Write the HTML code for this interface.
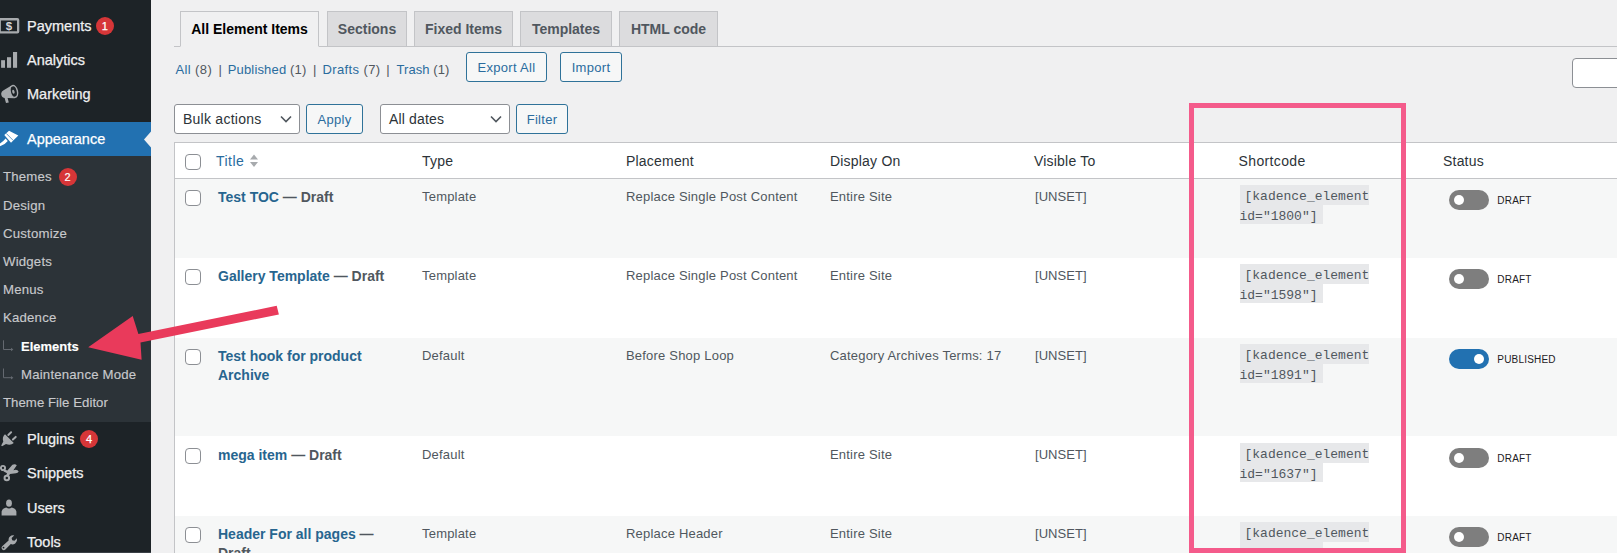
<!DOCTYPE html>
<html><head><meta charset="utf-8">
<style>
*{box-sizing:border-box;margin:0;padding:0}
html,body{width:1617px;height:553px;overflow:hidden;background:#f0f0f1;font-family:"Liberation Sans",sans-serif;color:#3c434a}
#page{position:relative;width:1617px;height:553px;overflow:hidden}
a{text-decoration:none;color:#2a6c9e}
/* sidebar */
#side{position:absolute;left:0;top:0;width:151px;height:553px;background:#1d2327}
.mi{position:absolute;left:0;width:151px;height:34px;color:#f0f0f1;font-size:14.5px;line-height:34px;white-space:nowrap}
.mi .t{position:absolute;left:27px;top:0;-webkit-text-stroke:.25px currentColor}
.mi svg{position:absolute;left:-2px;top:7px}
.bdg{display:inline-block;background:#d63638;color:#fff;border-radius:9px;width:18px;height:18px;line-height:18px;font-size:11px;text-align:center;vertical-align:middle;margin-left:4px;position:relative;top:-1px}
#sub{position:absolute;left:0;top:156px;width:151px;height:266px;background:#2c3338}
.si{position:absolute;left:3px;-webkit-text-stroke:.15px currentColor;color:#c8c9cc;font-size:13.2px;line-height:18px;white-space:nowrap;letter-spacing:.2px}
/* tabs */
.tab{position:absolute;top:11px;height:36px;border:1px solid #c3c4c7;background:#dcdcde;color:#50575e;font-weight:bold;font-size:14px;line-height:34px;text-align:center;white-space:nowrap}
.tab.on{background:#f0f0f1;color:#000;border-bottom-color:#f0f0f1}
#tabline{position:absolute;left:174px;right:0;top:46px;height:1px;background:#c3c4c7}
.btn{position:absolute;border:1px solid #2f7299;border-radius:3px;background:#f6f7f7;color:#2a6c9e;font-size:13px;text-align:center;white-space:nowrap;height:30px;line-height:30px;letter-spacing:.3px}
.sel{position:absolute;border:1px solid #8c8f94;border-radius:3px;background:#fff;color:#2c3338;font-size:14px;height:30px;line-height:28px;padding-left:8px;white-space:nowrap}
.sel svg{position:absolute;right:7px;top:10px}
.txt{position:absolute;white-space:nowrap;font-size:13px;line-height:18px;color:#50575e;letter-spacing:.28px;word-spacing:-.6px}
/* table */
#tbl{position:absolute;left:173.5px;top:142px;width:1460px;height:420px;background:#fff;border:1px solid #c3c4c7}
.row{position:absolute;left:174.5px;width:1450px}
.alt{background:#f6f7f7}
.cb{position:absolute;left:185px;width:16px;height:16px;border:1px solid #8c8f94;border-radius:4px;background:#fff}
.th{position:absolute;top:152px;font-size:14px;line-height:18px;color:#2c3338;white-space:nowrap;letter-spacing:.2px}
.ti{position:absolute;left:218px;font-size:14px;line-height:19px;font-weight:bold;color:#50575e;white-space:nowrap}
.ti a{color:#27658f}
.c{position:absolute;font-size:13px;line-height:18px;color:#50575e;white-space:nowrap;letter-spacing:.2px;margin-top:1px}
.code{position:absolute;left:1239.5px;width:140px;font-family:"Liberation Mono",monospace;font-size:13px;line-height:19.5px;color:#50575e}
.code code{font-family:inherit;background:#e7e8ea;padding:4px 5px 0.5px 5px;}
.tg{position:absolute;left:1449px;width:40px;height:20px;border-radius:10px;background:#7e7e7e}
.tg i{position:absolute;left:5px;top:5px;width:10px;height:10px;border-radius:5px;background:#fff}
.tg.on{background:#2271b1}
.tg.on i{left:25px}
.st{position:absolute;margin-top:1px;left:1497.3px;font-size:10px;line-height:12px;color:#1d2024;white-space:nowrap;letter-spacing:.2px}
#pink{position:absolute;left:1189.3px;top:102.7px;width:217.2px;height:450px;border:5.3px solid #f45b8b}
</style></head><body><div id="page">

<div id="side">
 <div class="mi" style="top:9px"><span class="t">Payments <span class="bdg" style="margin-left:0.4px">1</span></span></div>
 <div class="mi" style="top:43px"><span class="t">Analytics</span></div>
 <div class="mi" style="top:77px"><span class="t">Marketing</span></div>
 <div class="mi" style="top:122px;background:#2271b1;color:#fff"><span class="t">Appearance</span></div>
 <div id="sub"></div><div style="position:absolute;left:0;top:552px;width:151px;height:1px;background:#3a4046"></div>
 <div class="si" style="top:168px">Themes <span class="bdg" style="margin-left:3px">2</span></div>
 <div class="si" style="top:197px">Design</div>
 <div class="si" style="top:225px">Customize</div>
 <div class="si" style="top:253px">Widgets</div>
 <div class="si" style="top:281px">Menus</div>
 <div class="si" style="top:309px">Kadence</div>
 <div class="si" style="top:338px;left:21px;color:#fff;font-weight:bold;font-size:13px;letter-spacing:0">Elements</div>
 <div class="si" style="top:366px;left:21px">Maintenance Mode</div>
 <div class="si" style="top:394px;letter-spacing:.05px">Theme File Editor</div>
 <div class="mi" style="top:422px"><span class="t">Plugins <span class="bdg" style="margin-left:1.4px">4</span></span></div>
 <div class="mi" style="top:456px"><span class="t">Snippets</span></div>
 <div class="mi" style="top:491px"><span class="t">Users</span></div>
 <div class="mi" style="top:525px"><span class="t">Tools</span></div>

<svg style="position:absolute;left:0;top:0" width="151" height="553" viewBox="0 0 151 553">
 <g fill="#a7aaad" stroke="none">
  <!-- payments -->
  <path fill-rule="evenodd" d="M-1.3 18.1 H17.3 Q19.3 18.1 19.3 20.1 V31.6 Q19.3 33.6 17.3 33.6 H-1.3z M0.9 20.4 V31.3 H17 V20.4z"/>
  <!-- analytics -->
  <rect x="1.1" y="60.2" width="3.9" height="7.6"/>
  <rect x="7" y="57.2" width="4.1" height="10.6"/>
  <rect x="13" y="52" width="4.1" height="15.8"/>
  <!-- marketing -->
  <path d="M1.2 93.3 Q1.6 91.2 3.6 90.2 L11.5 85.6 Q9.6 88.5 10.4 92.5 Q11.3 96.6 14.4 98.3 L7.6 98 L8.8 102.6 L6 102.9 L4.6 98 Q1 97.3 1.2 93.3z"/>
  <ellipse cx="13.8" cy="91.5" rx="3.6" ry="6" transform="rotate(-14 13.8 91.5)" fill="none" stroke="#a7aaad" stroke-width="1.5"/>
  <ellipse cx="13.4" cy="91.7" rx="1.2" ry="2" transform="rotate(-14 13.4 91.7)"/>
  <!-- plugins -->
  <path d="M5 434.3 L13.8 443 Q10.5 446 6 444 L2 446.2 L1.2 445.4 L3.3 441.5 Q1.8 437.3 5 434.3z"/>
  <path d="M8.3 434.9 L11.1 432.3 M12.9 439.5 L15.7 436.9" stroke="#a7aaad" stroke-width="2" stroke-linecap="round" fill="none"/>
  <!-- snippets -->
  <circle cx="3" cy="468" r="2.1" fill="none" stroke="#a7aaad" stroke-width="1.9"/>
  <circle cx="6.8" cy="478.1" r="2.25" fill="none" stroke="#a7aaad" stroke-width="2"/>
  <path d="M4.4 469.4 L7.4 470.6 L12.4 464.7 Q15.2 463.8 16.8 465.2 L13.4 470.2 L15.8 469.7 Q17.8 470 18.7 471.4 Q17.8 472.8 16 473.3 L10 473.9 L8.4 476.4 L6.2 475.4 L7 473.2 L3.4 471.2z"/>
  <!-- users -->
  <ellipse cx="9" cy="503.2" rx="2.9" ry="3.6"/>
  <path d="M1.6 515.6 V511.6 Q1.8 508.8 6.2 507.5 Q9 509.4 11.8 507.5 Q16.2 508.8 16.4 511.6 V515.6z"/>
  <!-- tools -->
  <path d="M2.2 549.5 Q0.6 547.8 2.2 546.2 L8.6 540.6 Q8.2 537.2 11.4 535.6 Q13 535 14.2 535.4 L11.6 538 L12.2 540.2 L14.4 540.8 L17 538.2 Q17.6 541.4 15.2 543.4 Q13 545 10.8 544 L5.4 549.6 Q3.8 551 2.2 549.5z"/>
 </g>
 <circle cx="3.5" cy="547.6" r="0.9" fill="#1d2327"/>
 <text x="8.9" y="30.1" text-anchor="middle" font-family="Liberation Sans, sans-serif" font-weight="bold" font-size="11.5" fill="#d5d7da">$</text>
 <!-- appearance brush (white) -->
 <g fill="#fff">
  <path d="M9 130.8 L18.3 135.4 L11 142.8 L4.3 135 z"/>
  <path d="M5.6 138.6 L7.8 140.9 Q4 145.6 -1 146.4 L-1 144 Q2.6 142.4 5.6 138.6z"/>
 </g>
 <path d="M6.2 133.4 L13.2 140.4" stroke="#2271b1" stroke-width="0.7"/>
 <!-- notch -->
 <path d="M151 131.5 L144 139.5 L151 147.5z" fill="#f0f0f1"/>
 <!-- submenu arrows -->
 <g fill="none" stroke="#646970" stroke-width="1">
  <path d="M3.5 340.3 V349.5 H12"/>
  <path d="M3.5 368.5 V377.7 H12"/>
 </g>
 <path d="M11 347.8 L13.4 349.5 L11 351.2z M11 376 L13.4 377.7 L11 379.4z" fill="#646970"/>
</svg>
</div>

<div id="tabline"></div>
<div class="tab on" style="left:180px;width:139px">All Element Items</div>
<div class="tab" style="left:327px;width:80px">Sections</div>
<div class="tab" style="left:414px;width:99px">Fixed Items</div>
<div class="tab" style="left:520px;width:92px">Templates</div>
<div class="tab" style="left:619px;width:99px">HTML code</div>

<div class="txt" style="left:0;top:61px;word-spacing:0">
<span style="position:absolute;left:175.5px;letter-spacing:.38px"><a>All</a> (8)</span>
<span style="position:absolute;left:218.4px">|</span>
<span style="position:absolute;left:227.7px;letter-spacing:.17px"><a>Published</a> (1)</span>
<span style="position:absolute;left:313.1px">|</span>
<span style="position:absolute;left:322.4px;letter-spacing:.4px"><a>Drafts</a> (7)</span>
<span style="position:absolute;left:386.3px">|</span>
<span style="position:absolute;left:396.5px;letter-spacing:.07px"><a>Trash</a> (1)</span>
</div>
<div class="btn" style="left:466px;top:52px;width:81px">Export All</div>
<div class="btn" style="left:560px;top:52px;width:62px">Import</div>
<div class="sel" style="left:1572px;top:58px;width:60px;border-radius:4px"></div>

<div class="sel" style="left:174px;top:104px;width:126px;letter-spacing:.25px">Bulk actions<svg width="12" height="8" viewBox="0 0 12 8"><path d="M1 1.5 L6 6.5 L11 1.5" fill="none" stroke="#50575e" stroke-width="1.6"/></svg></div>
<div class="btn" style="left:306px;top:104px;width:57px">Apply</div>
<div class="sel" style="left:380px;top:104px;width:130px;letter-spacing:.15px">All dates<svg width="12" height="8" viewBox="0 0 12 8"><path d="M1 1.5 L6 6.5 L11 1.5" fill="none" stroke="#50575e" stroke-width="1.6"/></svg></div>
<div class="btn" style="left:516px;top:104px;width:52px">Filter</div>

<div id="tbl"></div>
<div class="row" style="top:143px;height:36px;border-bottom:1px solid #c3c4c7"></div>
<div class="row alt" style="top:179px;height:79px"></div>
<div class="row alt" style="top:338px;height:98px"></div>
<div class="row alt" style="top:515.5px;height:60px"></div>

<div class="cb" style="top:154px"></div>
<div class="th" style="left:216px;color:#2a6c9e;letter-spacing:.45px">Title</div>
<svg style="position:absolute;left:249px;top:154px" width="10" height="14" viewBox="0 0 10 14"><path d="M1 5.5 L5 0.5 L9 5.5z M1 8 L5 13 L9 8z" fill="#a7aaad"/></svg>
<div class="th" style="left:422px">Type</div>
<div class="th" style="left:626px">Placement</div>
<div class="th" style="left:830px">Display On</div>
<div class="th" style="left:1034px">Visible To</div>
<div class="th" style="left:1238.6px;letter-spacing:.35px">Shortcode</div>
<div class="th" style="left:1443px">Status</div>

<!-- row 1 -->
<div class="cb" style="top:190px"></div>
<div class="ti" style="top:188px"><a>Test TOC</a> — Draft</div>
<div class="c" style="left:422px;top:187px">Template</div>
<div class="c" style="left:626px;top:187px">Replace Single Post Content</div>
<div class="c" style="left:830px;top:187px">Entire Site</div>
<div class="c" style="letter-spacing:.05px;left:1035px;top:187px">[UNSET]</div>
<div class="code" style="top:187px"><code>[kadence_element id="1800"]</code></div>
<div class="tg" style="top:190px"><i></i></div><div class="st" style="top:194px">DRAFT</div>

<!-- row 2 -->
<div class="cb" style="top:269px"></div>
<div class="ti" style="top:267px"><a>Gallery Template</a> — Draft</div>
<div class="c" style="left:422px;top:266px">Template</div>
<div class="c" style="left:626px;top:266px">Replace Single Post Content</div>
<div class="c" style="left:830px;top:266px">Entire Site</div>
<div class="c" style="letter-spacing:.05px;left:1035px;top:266px">[UNSET]</div>
<div class="code" style="top:266px"><code>[kadence_element id="1598"]</code></div>
<div class="tg" style="top:269px"><i></i></div><div class="st" style="top:273px">DRAFT</div>

<!-- row 3 -->
<div class="cb" style="top:349px"></div>
<div class="ti" style="top:347px"><a>Test hook for product<br>Archive</a></div>
<div class="c" style="left:422px;top:346px">Default</div>
<div class="c" style="left:626px;top:346px">Before Shop Loop</div>
<div class="c" style="left:830px;top:346px">Category Archives Terms: 17</div>
<div class="c" style="letter-spacing:.05px;left:1035px;top:346px">[UNSET]</div>
<div class="code" style="top:346px"><code>[kadence_element id="1891"]</code></div>
<div class="tg on" style="top:349px"><i></i></div><div class="st" style="top:353px">PUBLISHED</div>

<!-- row 4 -->
<div class="cb" style="top:448px"></div>
<div class="ti" style="top:446px"><a>mega item</a> — Draft</div>
<div class="c" style="left:422px;top:445px">Default</div>
<div class="c" style="left:830px;top:445px">Entire Site</div>
<div class="c" style="letter-spacing:.05px;left:1035px;top:445px">[UNSET]</div>
<div class="code" style="top:445px"><code>[kadence_element id="1637"]</code></div>
<div class="tg" style="top:448px"><i></i></div><div class="st" style="top:452px">DRAFT</div>

<!-- row 5 -->
<div class="cb" style="top:527px"></div>
<div class="ti" style="top:525px"><a>Header For all pages</a> —<br>Draft</div>
<div class="c" style="left:422px;top:524px">Template</div>
<div class="c" style="left:626px;top:524px">Replace Header</div>
<div class="c" style="left:830px;top:524px">Entire Site</div>
<div class="c" style="letter-spacing:.05px;left:1035px;top:524px">[UNSET]</div>
<div class="code" style="top:524px"><code>[kadence_element id="1453"]</code></div>
<div class="tg" style="top:527px"><i></i></div><div class="st" style="top:531px">DRAFT</div>

<div id="pink"></div>
<svg style="position:absolute;left:0;top:0" width="400" height="553"><polygon points="276.7,305.8 278.9,314.4 140.5,342.5 141.6,359.7 88.2,347.3 132.7,316 138.4,334" fill="#e93a5b"/></svg>

</div></body></html>
